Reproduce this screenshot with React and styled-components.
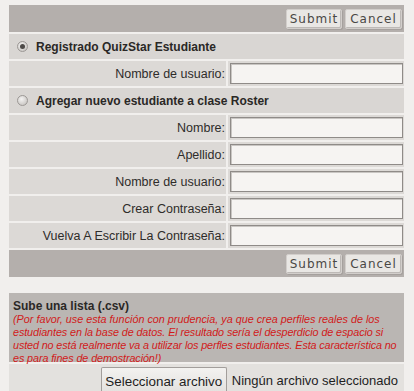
import React from "react";
import styled, { createGlobalStyle } from "styled-components";

const Global = createGlobalStyle`
  html, body { margin: 0; padding: 0; background: #f1efed; }
  body { font-family: "Liberation Sans", Arial, sans-serif; color: #222; }
`;

const Page = styled.div`
  padding: 5px 10px 0 9px;
  width: 414px;
  box-sizing: border-box;
`;

const Form = styled.div`
  display: flex;
  flex-direction: column;
  gap: 2px;
`;

const Bar = styled.div`
  height: 27px;
  background: #b4afac;
  display: flex;
  justify-content: flex-end;
  align-items: center;
  gap: 3px;
  padding-right: 2px;
`;

const BarButton = styled.button`
  height: 20px;
  width: ${(p) => p.$w}px;
  padding: 0;
  background: #e9e7e4;
  border: 1px solid #d2cecb;
  box-shadow: inset -1px -1px 0 #bdb9b6, 1px 1px 0 #a5a09d;
  border-radius: 2px;
  font-family: "DejaVu Sans", sans-serif;
  font-size: 12px;
  letter-spacing: 1px;
  color: #4a4745;
  cursor: pointer;
`;

const HeaderRow = styled.div`
  height: 25px;
  background: #d9d6d3;
  display: flex;
  align-items: center;
  padding-left: 8px;
  gap: 8px;
  font-weight: bold;
  font-size: 12px;
  color: #2a2826;
`;

const Radio = styled.span`
  width: 11px;
  height: 11px;
  border-radius: 50%;
  box-sizing: border-box;
  border: 1px solid #9c9895;
  background: radial-gradient(circle at 40% 35%, #f4f3f2 0%, #cfccc9 70%, #bab6b3 100%);
  display: flex;
  align-items: center;
  justify-content: center;
  &::after {
    content: "";
    display: ${(p) => (p.$checked ? "block" : "none")};
    width: 5px;
    height: 5px;
    border-radius: 50%;
    background: #4d4a48;
  }
`;

const FieldRow = styled.div`
  display: grid;
  grid-template-columns: 217px 1fr;
  gap: 2px;
  height: 25px;
`;

const Label = styled.div`
  background: #dcd9d6;
  display: flex;
  align-items: center;
  justify-content: flex-end;
  padding-right: 1px;
  font-size: 12.5px;
  color: #2e2c2a;
`;

const InputCell = styled.div`
  background: #dcd9d6;
  display: flex;
  align-items: center;
  padding: 0 1px 0 2px;
`;

const TextInput = styled.input`
  width: 100%;
  height: 21px;
  box-sizing: border-box;
  border: 1px solid #8f8b88;
  box-shadow: inset 1px 1px 0 #c9c6c3;
  background: #f6f4f2;
  outline: none;
`;

const Upload = styled.div`
  margin-top: 16px;
  display: flex;
  flex-direction: column;
  gap: 2px;
`;

const UploadInfo = styled.div`
  background: #bab6b3;
  padding: 6px 4px 6px 4px;
  height: 69px;
  box-sizing: border-box;
`;

const UploadTitle = styled.div`
  font-weight: bold;
  font-size: 12px;
  color: #2a2826;
  line-height: 14px;
`;

const Warning = styled.div`
  font-style: italic;
  font-size: 10.8px;
  line-height: 13px;
  color: #d11a1a;
`;

const WarningLine = styled.div`
  white-space: nowrap;
  letter-spacing: ${(p) => p.$ls}px;
`;

const FileRow = styled.div`
  background: #e3e1de;
  height: 30px;
  display: flex;
  align-items: flex-end;
  justify-content: flex-end;
  gap: 5px;
  padding-right: 6px;
`;

const FileButton = styled.button`
  height: 27px;
  width: 126px;
  padding: 0;
  background: linear-gradient(#f3f2f0, #e2e0dd);
  border: 1px solid #a29e9b;
  border-bottom: none;
  border-radius: 2px 2px 0 0;
  font-family: "Liberation Sans", Arial, sans-serif;
  font-size: 13.4px;
  color: #1e1e1e;
`;

const FileText = styled.span`
  font-size: 13px;
  line-height: 27px;
  color: #1e1e1e;
`;

const fields = [
  "Nombre:",
  "Apellido:",
  "Nombre de usuario:",
  "Crear Contraseña:",
  "Vuelva A Escribir La Contraseña:",
];

const warningLines = [
  { text: "(Por favor, use esta función con prudencia, ya que crea perfiles reales de los", ls: 0 },
  { text: "estudiantes en la base de datos. El resultado sería el desperdicio de espacio si", ls: -0.1 },
  { text: "usted no está realmente va a utilizar los perfles estudiantes. Esta característica no", ls: -0.12 },
  { text: "es para fines de demostración!)", ls: -0.1 },
];

function Buttons() {
  return (
    <Bar>
      <BarButton $w={56}>Submit</BarButton>
      <BarButton $w={57}>Cancel</BarButton>
    </Bar>
  );
}

function Field({ label }) {
  return (
    <FieldRow>
      <Label>{label}</Label>
      <InputCell>
        <TextInput type="text" />
      </InputCell>
    </FieldRow>
  );
}

export default function App() {
  return (
    <Page>
      <Global />
      <Form>
        <Buttons />
        <HeaderRow>
          <Radio $checked />
          Registrado QuizStar Estudiante
        </HeaderRow>
        <Field label="Nombre de usuario:" />
        <HeaderRow>
          <Radio />
          Agregar nuevo estudiante a clase Roster
        </HeaderRow>
        {fields.map((f) => (
          <Field key={f} label={f} />
        ))}
        <Buttons />
      </Form>
      <Upload>
        <UploadInfo>
          <UploadTitle>Sube una lista (.csv)</UploadTitle>
          <Warning>
            {warningLines.map((l) => (
              <WarningLine key={l.text} $ls={l.ls}>
                {l.text}
              </WarningLine>
            ))}
          </Warning>
        </UploadInfo>
        <FileRow>
          <FileButton>Seleccionar archivo</FileButton>
          <FileText>Ningún archivo seleccionado</FileText>
        </FileRow>
      </Upload>
    </Page>
  );
}
